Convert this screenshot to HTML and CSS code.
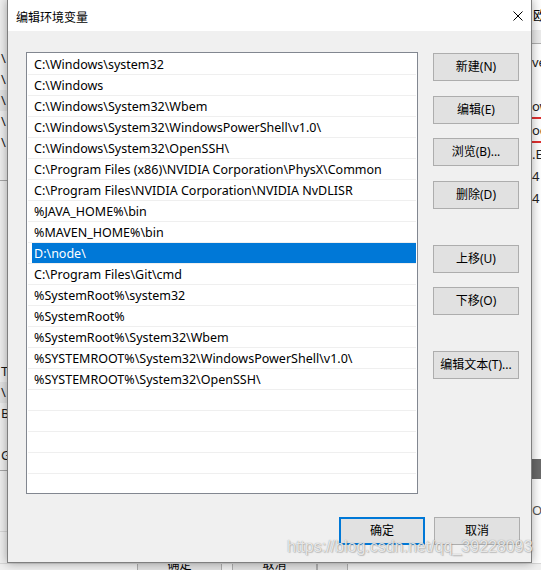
FILE: index.html
```html
<!DOCTYPE html>
<html lang="zh-CN">
<head>
<meta charset="utf-8">
<title>编辑环境变量</title>
<link rel="stylesheet" href="styles.css">
</head>
<body>
<div class="desktop">
  <div class="bg">
    <div class="bg-top">
      <div class="bg-left">
        <div class="frag f1">\</div>
        <div class="frag">\</div>
        <div class="frag hl">\</div>
        <div class="frag">\</div>
        <div class="frag">\</div>
        <div class="rule r1"></div>
        <div class="frag f2">T</div>
        <div class="frag hl">\</div>
        <div class="frag">B</div>
        <div class="frag f3">Gily</div>
        <div class="rule r2"></div>
        <div class="rule r3"></div>
      </div>
      <div class="bg-mid"></div>
      <div class="bg-right">
        <div class="rt-title">欧</div>
        <div class="rt-bar"></div>
        <div class="rt-line rl1">ve</div>
        <div class="rt-line rl2">ow</div>
        <div class="rt-red"></div>
        <div class="rt-line">oc</div>
        <div class="rt-red"></div>
        <div class="rt-line">.E</div>
        <div class="rt-line">4</div>
        <div class="rt-line">4</div>
        <div class="rt-dark"></div>
        <div class="rt-line rl3">O</div>
      </div>
    </div>
    <div class="bg-bottom">
      <div class="bgbtn">确定</div>
      <div class="bgbtn">取消</div>
      <div class="bgbtn narrow"></div>
    </div>
  </div>

  <div class="dialog">
    <div class="titlebar">
      <span class="title">编辑环境变量</span>
      <svg class="close" width="10" height="10" viewBox="0 0 10 10"><path d="M0.5 0.5 L9.5 9.5 M9.5 0.5 L0.5 9.5" stroke="#000" stroke-width="1" fill="none"/></svg>
    </div>
    <div class="body">
      <div class="main">
        <div class="list">
          <div class="row"><span class="cell">C:\Windows\system32</span></div>
          <div class="row"><span class="cell">C:\Windows</span></div>
          <div class="row"><span class="cell">C:\Windows\System32\Wbem</span></div>
          <div class="row"><span class="cell">C:\Windows\System32\WindowsPowerShell\v1.0\</span></div>
          <div class="row"><span class="cell">C:\Windows\System32\OpenSSH\</span></div>
          <div class="row"><span class="cell">C:\Program Files (x86)\NVIDIA Corporation\PhysX\Common</span></div>
          <div class="row"><span class="cell">C:\Program Files\NVIDIA Corporation\NVIDIA NvDLISR</span></div>
          <div class="row"><span class="cell">%JAVA_HOME%\bin</span></div>
          <div class="row"><span class="cell">%MAVEN_HOME%\bin</span></div>
          <div class="row selected"><span class="cell">D:\node\</span></div>
          <div class="row"><span class="cell">C:\Program Files\Git\cmd</span></div>
          <div class="row"><span class="cell">%SystemRoot%\system32</span></div>
          <div class="row"><span class="cell">%SystemRoot%</span></div>
          <div class="row"><span class="cell">%SystemRoot%\System32\Wbem</span></div>
          <div class="row"><span class="cell">%SYSTEMROOT%\System32\WindowsPowerShell\v1.0\</span></div>
          <div class="row"><span class="cell">%SYSTEMROOT%\System32\OpenSSH\</span></div>
          <div class="row"></div>
          <div class="row"></div>
          <div class="row"></div>
          <div class="row"></div>
          <div class="row"></div>
        </div>
        <div class="side">
          <button class="btn b-new">新建(N)</button>
          <button class="btn b-edit">编辑(E)</button>
          <button class="btn b-browse">浏览(B)...</button>
          <button class="btn b-del">删除(D)</button>
          <button class="btn b-up">上移(U)</button>
          <button class="btn b-down">下移(O)</button>
          <button class="btn b-text">编辑文本(T)...</button>
        </div>
      </div>
      <div class="footer">
        <button class="btn default">确定</button>
        <button class="btn">取消</button>
      </div>
    </div>
  </div>

  <div class="watermark">https://blog.csdn.net/qq_39228093</div>
</div>
</body>
</html>
```

FILE: styles.css
```css
* { box-sizing: border-box; }
html, body { margin: 0; padding: 0; }
body {
  width: 541px;
  height: 570px;
  overflow: hidden;
  background: #f0f0f0;
  font-family: "Noto Sans", "Noto Sans CJK SC", sans-serif;
  font-size: 12px;
  color: #000;
}
.desktop {
  position: relative;
  width: 541px;
  height: 570px;
  overflow: hidden;
}

/* background window fragments */
.bg { display: flex; flex-direction: column; width: 541px; height: 570px; }
.bg-top { display: flex; height: 563px; }
.bg-left {
  width: 8px;
  background: #f0f0f0;
  display: flex;
  flex-direction: column;
  padding-top: 48px;
  overflow: hidden;
}
.frag {
  height: 21px;
  line-height: 21px;
  font-size: 13px;
  padding-left: 1px;
  color: #1a1a1a;
  white-space: nowrap;
}
.frag.hl { background: #e4e4e4; }
.f2 { margin-top: 180px; }
.f3 { margin-top: 21px; }
.rule { height: 1px; background: #a8a8a8; }
.r1 { margin-top: 27px; }
.r2 { margin-top: 4px; }
.r3 { margin-top: 60px; background: #d8d8d8; }
.bg-mid { flex: 1; background: #f0f0f0; }
.bg-right {
  width: 10px;
  background: #fff;
  display: flex;
  flex-direction: column;
  overflow: hidden;
  border-left: 1px solid #d0d0d0;
}
.rt-title { height: 30px; line-height: 30px; font-size: 13px; padding-left: 1px; white-space: nowrap; }
.rt-bar { height: 14px; background: #ececec; border-bottom: 1px solid #b0b0b0; }
.rt-line { height: 22px; line-height: 22px; font-size: 13px; padding-left: 0; color: #222; white-space: nowrap; }
.rl1 { margin-top: 7px; }
.rl2 { margin-top: 22px; }
.rt-red { height: 2px; background: #e03030; }
.rt-dark { height: 20px; margin-top: 250px; background: #6a6a6a; }
.rl3 { margin-top: 20px; color: #555; }
.bg-bottom {
  height: 7px;
  display: flex;
  padding-left: 137px;
  gap: 10px;
  background: #f0f0f0;
  overflow: hidden;
  border-top: 1px solid #d8d8d8;
}
.bgbtn {
  width: 85px;
  height: 20px;
  margin-top: -9px;
  border: 1px solid #adadad;
  background: #e1e1e1;
  text-align: center;
  line-height: 18px;
  font-size: 12px;
}
.bgbtn.narrow { width: 31px; margin-left: -10px; }

/* dialog */
.dialog {
  position: absolute;
  left: 7px;
  top: -1px;
  width: 525px;
  height: 564px;
  border: 1px solid #7f7f7f;
  background: #f0f0f0;
  box-shadow: 0 0 10px rgba(0, 0, 0, 0.35);
  display: flex;
  flex-direction: column;
}
.titlebar {
  height: 31px;
  background: #fff;
  display: flex;
  align-items: center;
  padding-left: 8px;
  padding-right: 8px;
}
.title { font-size: 12px; font-family: "Noto Sans CJK SC", sans-serif; padding-top: 1px; }
.close { margin-left: auto; display: block; margin-top: 1px; }
.body {
  flex: 1;
  padding: 21px 11px 0 18px;
  display: flex;
  flex-direction: column;
}
.main { display: flex; gap: 15px; }
.list {
  width: 392px;
  height: 442px;
  border: 1px solid #828790;
  background: #fff;
  padding: 1px 1px 0 1px;
  overflow: hidden;
}
.row {
  height: 21px;
  border-bottom: 1px solid #efefef;
  display: flex;
  align-items: stretch;
}
.cell {
  display: flex;
  align-items: center;
  padding-left: 6px;
  padding-top: 1px;
  font-size: 12.5px;
  white-space: nowrap;
  flex: 1;
  line-height: 20px;
}
.row.selected .cell {
  margin-left: 4px;
  padding-left: 2px;
  background: #0078d7;
  color: #fff;
}
.side { display: flex; flex-direction: column; }
.btn {
  width: 86px;
  height: 28px;
  padding: 0;
  margin: 0;
  border: 1px solid #adadad;
  background: #e1e1e1;
  font-family: "Noto Sans", "Noto Sans CJK SC", sans-serif;
  font-size: 12px;
  color: #000;
  line-height: 26px;
  text-align: center;
}
.b-new { margin-top: 1px; }
.b-edit { margin-top: 15px; }
.b-browse { margin-top: 14px; }
.b-del { margin-top: 15px; }
.b-up { margin-top: 36px; }
.b-down { margin-top: 14px; }
.b-text { margin-top: 36px; }
.footer {
  display: flex;
  justify-content: flex-end;
  gap: 9px;
  margin-top: 23px;
}
.btn.default { border: 2px solid #0078d7; line-height: 24px; }

.watermark {
  position: absolute;
  left: 287px;
  top: 538px;
  font-family: "Liberation Sans", Arial, sans-serif;
  font-size: 16px;
  color: rgba(255, 255, 255, 0.8);
  text-shadow: 0 0 1px rgba(90, 90, 90, 0.7), 1px 1px 1px rgba(120, 120, 120, 0.35);
  white-space: nowrap;
  pointer-events: none;
}
```
